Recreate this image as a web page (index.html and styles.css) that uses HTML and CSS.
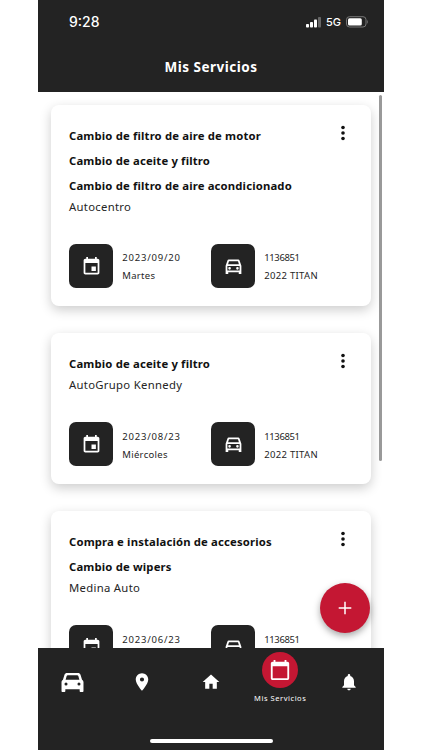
FILE: index.html
```html
<!DOCTYPE html>
<html lang="es">
<head>
<meta charset="utf-8">
<title>Mis Servicios</title>
<link rel="stylesheet" href="styles.css">
</head>
<body>
<svg class="sprite" aria-hidden="true">
  <symbol id="event" viewBox="0 0 24 24"><path d="M17 12h-5v5h5v-5zM16 1v2H8V1H6v2H5c-1.100 0-2 .9-2 2v14c0 1.100.9 2 2 2h14c1.100 0 2-.9 2-2V5c0-1.100-.9-2-2-2h-1V1h-2zm3 18H5V8h14v11z"/></symbol>
  <symbol id="today" viewBox="0 0 24 24"><path d="M20 3h-1V1h-2v2H7V1H5v2H4c-1.100 0-2 .9-2 2v16c0 1.100.9 2 2 2h16c1.100 0 2-.9 2-2V5c0-1.100-.9-2-2-2zm0 18H4V8h16v13z"/></symbol>
  <symbol id="car-outline" viewBox="0 0 24 24"><path fill-rule="evenodd" d="M18.920 5C18.700 4.400 18.160 4 17.500 4h-11c-.66 0-1.210.4-1.420 1L3 11v9.500h3V18.500h12v2h3V11l-2.080-6zM6.850 6h10.290l1.040 3.300H5.810L6.850 6zM19 16.700H5v-5.200h14v5.200zM7.500 12.600a1.500 1.500 0 1 0 0 3 1.500 1.500 0 0 0 0-3zM16.500 12.600a1.500 1.500 0 1 0 0 3 1.500 1.500 0 0 0 0-3z"/></symbol>
  <symbol id="car" viewBox="0 0 24 22"><path fill-rule="evenodd" d="M6.300 1h11.400c1.300 0 2.200.6 2.700 1.800L22 8c.9.600 1.500 1.400 1.500 2.600v9.200c0 .7-.4 1.200-1.200 1.200h-1.600c-.8 0-1.200-.5-1.200-1.200V18h-15v1.800c0 .7-.4 1.200-1.200 1.200H1.700c-.8 0-1.200-.5-1.200-1.200v-9.200C.5 9.400 1.100 8.600 2 8l1.600-5.200C4.100 1.600 5 1 6.300 1zm.8 2.500c-.6 0-1 .3-1.200.8L4.800 8h14.400l-1.100-3.700c-.2-.5-.6-.8-1.200-.8zM5.200 11a1.600 1.600 0 1 0 0 3.200 1.600 1.600 0 0 0 0-3.200zm13.600 0a1.600 1.600 0 1 0 0 3.200 1.600 1.600 0 0 0 0-3.200z"/></symbol>
  <symbol id="pin" viewBox="0 0 24 24"><path d="M12 1.500C7.900 1.500 4.500 4.900 4.500 9c0 5.400 7.500 13.500 7.500 13.500S19.500 14.400 19.500 9c0-4.100-3.400-7.500-7.500-7.500zm0 10a2.500 2.500 0 0 1 0-5 2.500 2.500 0 0 1 0 5z"/></symbol>
  <symbol id="home" viewBox="0 0 24 24"><path d="M10 20v-6h4v6h5v-8h3L12 3 2 12h3v8z"/></symbol>
  <symbol id="bell" viewBox="0 0 24 24"><path d="M12 22c1.100 0 2-.9 2-2h-4c0 1.100.9 2 2 2zm6-6v-5c0-3.070-1.640-5.640-4.500-6.320V4a1.500 1.500 0 0 0-3 0v.68C7.630 5.360 6 7.920 6 11v5l-2 2v1h16v-1z"/></symbol>
  <symbol id="more" viewBox="0 0 6 16"><circle cx="3" cy="2.500" r="1.800"/><circle cx="3" cy="8" r="1.800"/><circle cx="3" cy="13.500" r="1.800"/></symbol>
</svg>
<div class="phone">
  <header class="header">
    <div class="status">
      <span class="time">9:28</span>
      <span class="signals">
        <svg class="bars" viewBox="0 0 16 11"><rect x="0" y="7" width="3" height="3.500" rx=".8"/><rect x="4" y="5" width="3" height="5.500" rx=".8"/><rect x="8" y="2.500" width="3" height="8" rx=".8"/><rect class="dim" x="12" y="0" width="3" height="10.500" rx=".8"/></svg>
        <span class="network">5G</span>
        <svg class="battery" viewBox="0 0 23 12"><rect class="shell" x=".5" y=".7" width="19.500" height="10.300" rx="3"/><rect x="2" y="2.200" width="13.800" height="7.300" rx="1.500"/><path class="dim" d="M21 4c1.300.7 1.300 3 0 3.700z"/></svg>
      </span>
    </div>
    <h1 class="screen-title">Mis Servicios</h1>
  </header>
  <main class="list">
    <article class="card">
      <svg class="more"><use href="#more"/></svg>
      <h2 class="service">Cambio de filtro de aire de motor</h2>
      <h2 class="service">Cambio de aceite y filtro</h2>
      <h2 class="service">Cambio de filtro de aire acondicionado</h2>
      <p class="shop">Autocentro</p>
      <div class="details">
        <div class="detail"><span class="tile"><svg><use href="#event"/></svg></span><p class="info"><span class="date">2023/09/20</span><br>Martes</p></div>
        <div class="detail"><span class="tile"><svg><use href="#car-outline"/></svg></span><p class="info"><span class="code">1136851</span><br>2022 TITAN</p></div>
      </div>
    </article>
    <article class="card">
      <svg class="more"><use href="#more"/></svg>
      <h2 class="service">Cambio de aceite y filtro</h2>
      <p class="shop">AutoGrupo Kennedy</p>
      <div class="details">
        <div class="detail"><span class="tile"><svg><use href="#event"/></svg></span><p class="info"><span class="date">2023/08/23</span><br>Miércoles</p></div>
        <div class="detail"><span class="tile"><svg><use href="#car-outline"/></svg></span><p class="info"><span class="code">1136851</span><br>2022 TITAN</p></div>
      </div>
    </article>
    <article class="card">
      <svg class="more"><use href="#more"/></svg>
      <h2 class="service">Compra e instalación de accesorios</h2>
      <h2 class="service">Cambio de wipers</h2>
      <p class="shop">Medina Auto</p>
      <div class="details">
        <div class="detail"><span class="tile"><svg><use href="#event"/></svg></span><p class="info"><span class="date">2023/06/23</span></p></div>
        <div class="detail"><span class="tile"><svg><use href="#car-outline"/></svg></span><p class="info"><span class="code">1136851</span></p></div>
      </div>
    </article>
    <div class="scrollbar"></div>
    <button class="fab" aria-label="Agregar"><svg viewBox="0 0 14 14"><path d="M7 .7v12.600M.7 7h12.600"/></svg></button>
  </main>
  <nav class="nav">
    <div class="tabs">
      <a class="tab"><svg class="i-car"><use href="#car"/></svg></a>
      <a class="tab"><svg class="i-pin"><use href="#pin"/></svg></a>
      <a class="tab"><svg class="i-home"><use href="#home"/></svg></a>
      <a class="tab active"><span class="disc"><svg><use href="#today"/></svg></span><span class="label">Mis Servicios</span></a>
      <a class="tab"><svg class="i-bell"><use href="#bell"/></svg></a>
    </div>
    <div class="home-bar"></div>
  </nav>
</div>
</body>
</html>
```
FILE: styles.css
```css
* { box-sizing: border-box; margin: 0; padding: 0; }
body { width: 422px; height: 750px; overflow: hidden; background: #fff; font-family: "Noto Sans", "Open Sans", sans-serif; color: #111; }
svg { fill: currentColor; display: block; }
.sprite { position: absolute; width: 0; height: 0; }
.phone { width: 346px; height: 750px; margin-left: 38px; display: flex; flex-direction: column; }

.header { height: 91.500px; flex: none; background: #232323; color: #fff; }
.status { height: 44px; padding: 0 15px 0 31px; display: flex; justify-content: space-between; align-items: center; }
.time { font: 500 14px/20px Inter, sans-serif; }
.signals { display: flex; align-items: center; }
.bars { width: 16px; height: 11px; margin-right: 4px; }
.network { font: 500 11px/14px Inter, sans-serif; width: 20px; }
.battery { width: 23px; height: 12px; }
.dim { fill: #666; }
.shell { fill: none; stroke: #777; }
.screen-title { text-align: center; font-size: 13.500px; line-height: 20px; margin-top: 13px; font-weight: 700; letter-spacing: 0.480px; }

.list { position: relative; flex: 1; min-height: 0; overflow: hidden; padding: 13.500px 13px 0; display: flex; flex-direction: column; gap: 26.900px; }
.card { position: relative; flex: none; width: 320px; padding: 18px; border-radius: 8px; background: #fff; box-shadow: 0 4px 12px rgba(0, 0, 0, 0.200); }
.more { position: absolute; left: 288.500px; top: 20px; width: 6px; height: 16px; }
.service { font-size: 11.300px; line-height: 25px; font-weight: 700; white-space: nowrap; letter-spacing: 0.160px; }
.shop { font-size: 11.300px; line-height: 18px; letter-spacing: 0.300px; color: #252525; }
.details { display: flex; margin-top: 28px; }
.detail { width: 142px; display: flex; align-items: center; gap: 9px; height: 44.300px; }
.tile { width: 44.300px; height: 44.300px; flex: none; border-radius: 7px; background: #232323; color: #fff; display: grid; place-items: center; }
.tile svg { width: 21px; height: 21px; }
.info { align-self: flex-start; padding-top: 5.400px; font-size: 9.500px; line-height: 18px; letter-spacing: 0.300px; color: #252525; white-space: nowrap; }
.date { letter-spacing: 0.800px; }
.code { letter-spacing: -0.400px; }
.scrollbar { position: absolute; right: 2.500px; top: 3px; width: 2.500px; height: 366px; border-radius: 2px; background: #999; }
.fab { position: absolute; left: 282px; top: 491.500px; width: 50px; height: 50px; border: 0; border-radius: 50%; background: #c41733; color: #fff; display: grid; place-items: center; box-shadow: 0 3px 7px rgba(0, 0, 0, 0.350); }
.fab svg { width: 14px; height: 14px; fill: none; stroke: #fff; stroke-width: 1.500; }

.nav { position: relative; height: 102.500px; flex: none; background: #232323; color: #fff; display: flex; flex-direction: column; justify-content: space-between; align-items: center; padding-bottom: 7px; }
.tabs { display: flex; width: 100%; height: 69px; }
.tab { flex: 1; display: flex; flex-direction: column; align-items: center; justify-content: center; }
.i-car { width: 23px; height: 21px; }
.i-pin, .i-home, .i-bell { width: 20px; height: 20px; }
.active { justify-content: flex-start; padding-top: 4.500px; }
.disc { width: 36px; height: 36px; border-radius: 50%; background: #c41733; display: grid; place-items: center; }
.disc svg { width: 22px; height: 22px; }
.label { font-size: 7.500px; line-height: 11px; margin-top: 5px; font-weight: 400; white-space: nowrap; letter-spacing: 0.550px; }
.home-bar { width: 123px; height: 4.500px; border-radius: 3px; background: #fff; }
```
